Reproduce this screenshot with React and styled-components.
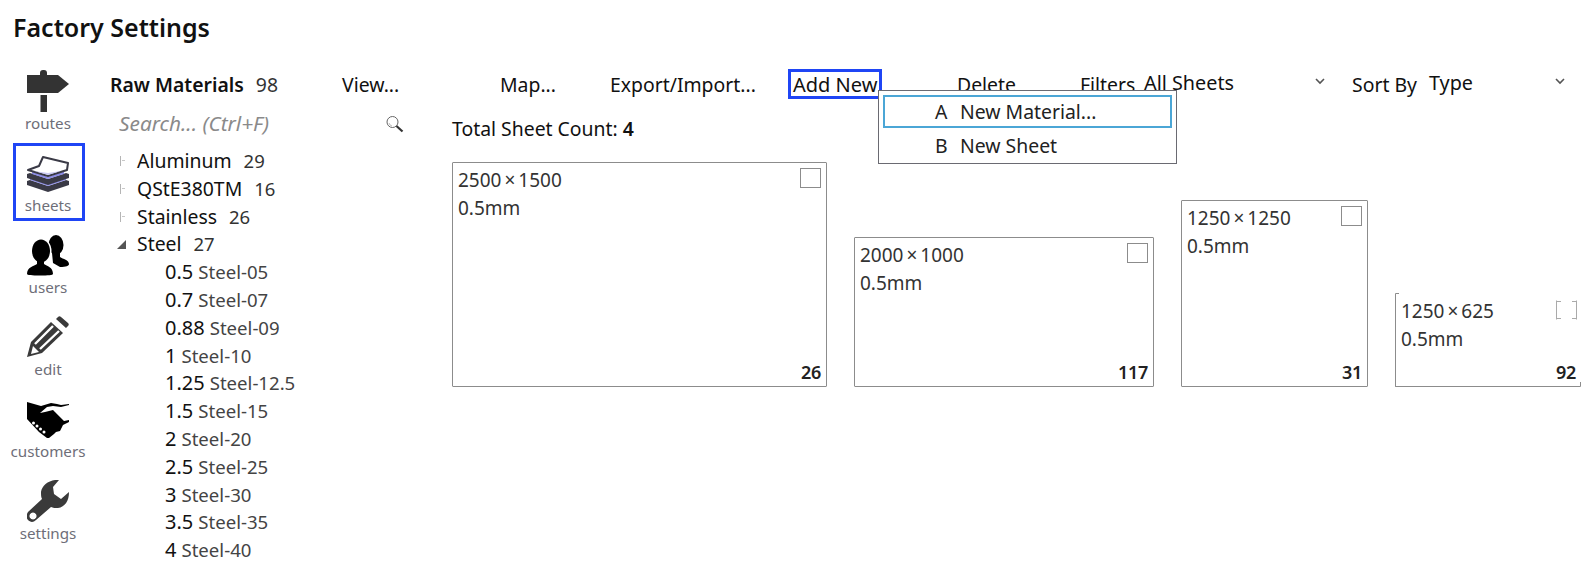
import React from "react";
import styled, { createGlobalStyle } from "styled-components";

const GlobalStyle = createGlobalStyle`
  html, body {
    margin: 0;
    padding: 0;
    background: #fff;
    overflow: hidden;
  }
  body {
    font-family: "Noto Sans", "Open Sans", sans-serif;
    color: #111;
  }
`;

const Page = styled.div`
  width: 1585px;
  height: 564px;
  overflow: hidden;
  position: relative;
  display: flex;
  flex-direction: column;
`;

const Title = styled.h1`
  margin: 0;
  padding: 11px 0 0 13px;
  height: 49px;
  box-sizing: border-box;
  font-size: 25px;
  line-height: 33px;
  font-weight: 600;
  color: #111;
`;

const Body = styled.div`
  display: flex;
`;

const NavRail = styled.nav`
  width: 110px;
  padding: 12px 0 0 13px;
  box-sizing: border-box;
  display: flex;
  flex-direction: column;
  gap: 4px;
`;

const NavItem = styled.div`
  width: 72px;
  height: 78px;
  box-sizing: border-box;
  border: 3px solid ${({ $active }) => ($active ? "#1f45f5" : "transparent")};
  display: flex;
  flex-direction: column;
  align-items: center;
  padding: 6px 2px 0 0;
`;

const NavIcon = styled.svg`
  width: 42px;
  height: 42px;
  flex: none;
`;

const NavLabel = styled.span`
  font-size: 15.2px;
  line-height: 20px;
  margin-top: 1px;
  color: #6e6e78;
  white-space: nowrap;
`;

const Content = styled.div`
  flex: 1;
  min-width: 0;
  padding-top: 10px;
`;

const Toolbar = styled.div`
  display: flex;
  align-items: center;
  height: 50px;
  font-size: 19.4px;
`;

const HeadLabel = styled.div`
  width: 232px;
  font-weight: 600;
  white-space: nowrap;
`;

const HeadCount = styled.span`
  font-weight: 400;
  color: #333;
  margin-left: 12px;
`;

const ToolButton = styled.div`
  width: ${({ $w }) => $w}px;
  white-space: nowrap;
  box-sizing: border-box;
`;

const FocusBox = styled.div`
  width: 94px;
  height: 30px;
  margin-right: 75px;
  box-sizing: border-box;
  border: 3px solid #1f45f5;
  display: flex;
  align-items: center;
  padding-left: 2px;
  white-space: nowrap;
  font-size: 20px;
`;

const Picker = styled.div`
  width: ${({ $w }) => $w}px;
  display: flex;
  align-items: center;
  position: relative;
  top: -2px;
  font-size: 19.8px;
  white-space: nowrap;
`;

const Chevron = styled.svg`
  width: 12px;
  height: 8px;
  margin: -2px ${({ $mr }) => $mr}px 0 auto;
  flex: none;
`;

const Columns = styled.div`
  display: flex;
`;

const TreePanel = styled.div`
  width: 342px;
  flex: none;
`;

const SearchRow = styled.div`
  display: flex;
  align-items: center;
  justify-content: space-between;
  width: 294px;
  padding-left: 9px;
  box-sizing: border-box;
  height: 30px;
`;

const SearchText = styled.span`
  font-size: 20.8px;
  font-style: italic;
  color: #8a8a8a;
  position: relative;
  top: -1px;
`;

const TreeList = styled.div`
  margin-top: 8px;
  display: flex;
  flex-direction: column;
`;

const TreeRow = styled.div`
  height: 27.8px;
  display: flex;
  align-items: baseline;
  line-height: 27.8px;
  padding-left: ${({ $child }) => ($child ? 55 : 27)}px;
  font-size: ${({ $child }) => ($child ? 20 : 19.4)}px;
  white-space: nowrap;
  position: relative;
`;

const Expander = styled.span`
  position: absolute;
  left: 10px;
  top: 9px;
  width: 7px;
  height: 10px;
  border-left: 1px solid #b5b5b5;
  &::after {
    content: "";
    position: absolute;
    left: 1px;
    top: 4px;
    width: 3px;
    height: 1px;
    background: #c8c8c8;
  }
`;

const OpenArrow = styled.span`
  position: absolute;
  left: 7px;
  top: 10px;
  width: 0;
  height: 0;
  border-style: solid;
  border-width: 0 0 9px 9px;
  border-color: transparent transparent #555 transparent;
`;

const RowCount = styled.span`
  font-size: 18.5px;
  color: #333;
  margin-left: 12px;
`;

const RowName = styled.span`
  font-size: 18.6px;
  color: #444;
  margin-left: 5px;
`;

const SheetsPanel = styled.div`
  flex: 1;
  min-width: 0;
`;

const TotalLine = styled.div`
  height: 30px;
  line-height: 30px;
  margin: 5px 0 15px;
  font-size: 19.4px;
  & b {
    font-weight: 600;
  }
`;

const SheetRow = styled.div`
  display: flex;
  align-items: flex-end;
  gap: 27px;
  height: 228px;
`;

const Card = styled.div`
  width: ${({ $w }) => $w}px;
  height: ${({ $h }) => $h}px;
  box-sizing: border-box;
  flex: none;
  position: relative;
  padding: 3px 5px;
  border: 1px solid #8c8c8c;
  border-radius: 1px;
  font-size: 19px;
  line-height: 28px;
  color: #333;
  white-space: nowrap;
`;

const ClippedCard = styled(Card)`
  border: none;
  border-left: 1px solid #8c8c8c;
  border-bottom: 1px solid #8c8c8c;
  padding: 4px 5px;
  &::before {
    content: "";
    position: absolute;
    left: 0;
    top: 0;
    width: 3px;
    height: 1px;
    background: #8c8c8c;
  }
  &::after {
    content: "";
    position: absolute;
    right: 0;
    bottom: 0;
    width: 1px;
    height: 4px;
    background: #8c8c8c;
  }
`;

const Times = styled.span`
  padding: 0 3px;
`;

const Check = styled.span`
  position: absolute;
  top: 5px;
  right: 5px;
  width: 21px;
  height: 20px;
  box-sizing: border-box;
  border: 1px solid #8c8c8c;
`;

const ClippedCheck = styled(Check)`
  top: 7px;
  right: 4px;
  background:
    linear-gradient(#aaa, #aaa) left top / 4px 1px no-repeat,
    linear-gradient(#aaa, #aaa) right top / 4px 1px no-repeat,
    linear-gradient(#aaa, #aaa) left bottom / 4px 1px no-repeat,
    linear-gradient(#aaa, #aaa) right bottom / 4px 1px no-repeat;
  border-color: transparent #aaa;
`;

const Qty = styled.span`
  position: absolute;
  right: 5px;
  bottom: 0;
  font-size: 18px;
  font-weight: 600;
  letter-spacing: -0.3px;
  color: #222;
`;

const Menu = styled.div`
  position: absolute;
  left: 878px;
  top: 90px;
  width: 299px;
  height: 74px;
  box-sizing: border-box;
  border: 1px solid #6a6a72;
  background: #fff;
  padding: 4px 4px 0 4px;
  font-size: 19.4px;
  color: #222;
`;

const MenuItem = styled.div`
  height: ${({ $active }) => ($active ? 33 : 34)}px;
  box-sizing: border-box;
  border: 2px solid ${({ $active }) => ($active ? "#4ba6d6" : "transparent")};
  display: flex;
  align-items: center;
  white-space: nowrap;
`;

const MenuKey = styled.span`
  width: 75px;
  padding-left: 50px;
  box-sizing: border-box;
  flex: none;
`;

const RoutesIcon = () => (
  <NavIcon viewBox="0 0 42 42">
    <rect x="13" y="0" width="7" height="8" rx="3" fill="#333" />
    <path fill="#333" d="M0 5h31l11 9-11 9H0z" />
    <rect x="13.500" y="25" width="6.500" height="17" fill="#333" />
  </NavIcon>
);

const SheetsIcon = () => (
  <NavIcon viewBox="0 0 42 42">
    <path fill="#3a3a46" d="M0 29l3-1 18 6 18-6 3 1v4l-21 7-21-7z" />
    <path fill="#8c8ce6" d="M3 26l18 6 18-6v2l-18 6-18-6z" />
    <path fill="#3a3a46" d="M0 22l3-1 18 6 18-6 3 1v4l-21 7-21-7z" />
    <path fill="#8c8ce6" d="M5 19l16 6 16-6v3l-16 5-16-5z" />
    <path
      fill="#fff"
      stroke="#3a3a46"
      strokeWidth="2"
      strokeLinejoin="round"
      d="M16 5l25 6-1 7-19 6-20-6 11-4z"
    />
    <path fill="#c9c9f2" d="M7 19l14 4 13-4-13 2z" />
  </NavIcon>
);

const frontHead = "M14 5.500c5 0 9 5 9 11.500s-4 11.500-9 11.500-9-5-9-11.500 4-11.500 9-11.500z";
const frontBody = "M0 40c0-7 7-8 10-10v-5h7v5c3 2 9 3 9 10 0 1-5 1.500-13 1.500S0 41 0 40z";

const UsersIcon = () => (
  <NavIcon viewBox="0 0 42 42">
    <ellipse cx="29" cy="11" rx="7.500" ry="10" fill="#000" />
    <path fill="#000" d="M25 19h8v4c3 2 9 3 9 7 0 2-3 3-9 3l-7-4z" />
    <path fill="#fff" stroke="#fff" strokeWidth="3" d={frontHead + frontBody} />
    <path fill="#000" d={frontHead} />
    <path fill="#000" d={frontBody} />
  </NavIcon>
);

const EditIcon = () => (
  <NavIcon viewBox="0 0 42 42">
    <path fill="#3a3a3a" d="M34 1l7 6c1 1 1 2 0 3l-2 2-10-9 2-2c1-1 2-1 3 0z" />
    <path fill="#3a3a3a" d="M24 6l12 11-21 20-15 4 4-15z" />
    <path fill="none" stroke="#fff" strokeWidth="2.400" d="M8 28l18-18M13 33l19-18" />
    <path fill="#fff" d="M6 30l6 6-8 2z" />
  </NavIcon>
);

const CustomersIcon = () => (
  <NavIcon viewBox="0 -4 42 42">
    <path
      fill="#000"
      d="M0 0l14 4 10-3 6 1 4 1 8-1v1l-8 2-8-1-6 1-7 6 5-1 8-2 11 11 5-1v2l-6 3-3 6-4 1-2 2-5 4h-2l-8-6L0 17z"
    />
    <g fill="#fff">
      <circle cx="6.500" cy="21" r="1.500" />
      <circle cx="10" cy="24" r="1.500" />
      <circle cx="13.500" cy="27" r="1.500" />
      <circle cx="17" cy="30" r="1.500" />
    </g>
  </NavIcon>
);

const SettingsIcon = () => (
  <NavIcon viewBox="0 0 42 42">
    <path
      fill="#3a3a3a"
      fillRule="evenodd"
      d="M32 0l-6 7 1 7 7 5 8-7c0 9-4 15-11 16-3 0-5 0-7-1L9 40c-3 3-6 2-8 0-2-2-2-5 0-8l14-13c-1-2-1-4-1-7 1-7 9-13 18-12zM6 32.500a3.500 3.500 0 1 0 0.010 0z"
    />
  </NavIcon>
);

const SearchIcon = () => (
  <svg width="18" height="18" viewBox="0 0 18 18">
    <circle cx="6.500" cy="7" r="5.500" fill="#fff" stroke="#666" strokeWidth="1" />
    <path d="M3 8a4 4 0 0 0 3 3" fill="none" stroke="#bbb" strokeWidth="1" />
    <path d="M10.500 11l6 5.500" stroke="#333" strokeWidth="2.200" />
  </svg>
);

const DownIcon = ({ mr }) => (
  <Chevron $mr={mr} viewBox="0 0 12 8">
    <path d="M2 2l4 4 4-4" fill="none" stroke="#555" strokeWidth="1.600" />
  </Chevron>
);

const navItems = [
  { label: "routes", Icon: RoutesIcon },
  { label: "sheets", Icon: SheetsIcon, active: true },
  { label: "users", Icon: UsersIcon },
  { label: "edit", Icon: EditIcon },
  { label: "customers", Icon: CustomersIcon },
  { label: "settings", Icon: SettingsIcon },
];

const groups = [
  { name: "Aluminum", count: 29 },
  { name: "QStE380TM", count: 16 },
  { name: "Stainless", count: 26 },
];

const steel = [
  ["0.5", "Steel-05"],
  ["0.7", "Steel-07"],
  ["0.88", "Steel-09"],
  ["1", "Steel-10"],
  ["1.25", "Steel-12.5"],
  ["1.5", "Steel-15"],
  ["2", "Steel-20"],
  ["2.5", "Steel-25"],
  ["3", "Steel-30"],
  ["3.5", "Steel-35"],
  ["4", "Steel-40"],
];

const sheets = [
  { w1: "2500", w2: "1500", w: 375, h: 225, qty: 26 },
  { w1: "2000", w2: "1000", w: 300, h: 150, qty: 117 },
  { w1: "1250", w2: "1250", w: 187, h: 187, qty: 31 },
];

const App = () => {
  return (
    <Page>
      <GlobalStyle />
      <Title>Factory Settings</Title>
      <Body>
        <NavRail>
          {navItems.map(({ label, Icon, active }) => (
            <NavItem key={label} $active={active}>
              <Icon />
              <NavLabel>{label}</NavLabel>
            </NavItem>
          ))}
        </NavRail>
        <Content>
          <Toolbar>
            <HeadLabel>
              Raw Materials<HeadCount>98</HeadCount>
            </HeadLabel>
            <ToolButton $w={158}>View...</ToolButton>
            <ToolButton $w={110}>Map...</ToolButton>
            <ToolButton $w={178}>Export/Import...</ToolButton>
            <FocusBox>Add New</FocusBox>
            <ToolButton $w={123}>Delete</ToolButton>
            <ToolButton $w={64}>Filters</ToolButton>
            <Picker $w={208}>
              All Sheets
              <DownIcon mr={26} />
            </Picker>
            <ToolButton $w={77}>Sort By</ToolButton>
            <Picker $w={146}>
              Type
              <DownIcon mr={9} />
            </Picker>
          </Toolbar>
          <Columns>
            <TreePanel>
              <SearchRow>
                <SearchText>Search... (Ctrl+F)</SearchText>
                <SearchIcon />
              </SearchRow>
              <TreeList>
                {groups.map((g) => (
                  <TreeRow key={g.name}>
                    <Expander />
                    {g.name}
                    <RowCount>{g.count}</RowCount>
                  </TreeRow>
                ))}
                <TreeRow>
                  <OpenArrow />
                  Steel
                  <RowCount>27</RowCount>
                </TreeRow>
                {steel.map(([gauge, name]) => (
                  <TreeRow key={name} $child>
                    {gauge}
                    <RowName>{name}</RowName>
                  </TreeRow>
                ))}
              </TreeList>
            </TreePanel>
            <SheetsPanel>
              <TotalLine>
                Total Sheet Count: <b>4</b>
              </TotalLine>
              <SheetRow>
                {sheets.map((s) => (
                  <Card key={s.w1} $w={s.w} $h={s.h}>
                    {s.w1}
                    <Times>×</Times>
                    {s.w2}
                    <br />
                    0.5mm
                    <Check />
                    <Qty>{s.qty}</Qty>
                  </Card>
                ))}
                <ClippedCard $w={186} $h={94}>
                  1250<Times>×</Times>625
                  <br />
                  0.5mm
                  <ClippedCheck />
                  <Qty>92</Qty>
                </ClippedCard>
              </SheetRow>
            </SheetsPanel>
          </Columns>
        </Content>
      </Body>
      <Menu>
        <MenuItem $active>
          <MenuKey>A</MenuKey>New Material...
        </MenuItem>
        <MenuItem>
          <MenuKey>B</MenuKey>New Sheet
        </MenuItem>
      </Menu>
    </Page>
  );
};

export default App;
